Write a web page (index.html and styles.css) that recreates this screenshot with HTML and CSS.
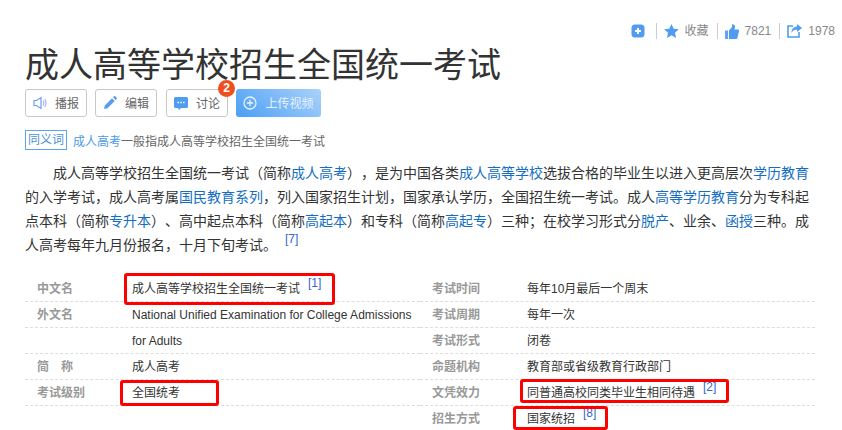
FILE: index.html
```html
<!DOCTYPE html>
<html>
    <head>
        <meta charset="utf-8">
        <title>成人高等学校招生全国统一考试</title>
        <link rel="stylesheet" href="styles.css">
    </head>
    <body>
        <div class="topBar">
            <span class="topItem">
                <svg class="topIcon" width="14" height="14" viewBox="0 0 14 14"><rect x="0.500" y="0.500" width="13" height="13" rx="3.500" fill="#4f9cf0"/><path d="M7 4v6M4 7h6" stroke="#fff" stroke-width="2"/></svg>
            </span>
            <span class="topItem">
                <svg class="topIcon" width="15" height="14" viewBox="0 0 15 14"><path d="M7.500 0l2.200 4.700 5.100.6-3.800 3.500 1 5.100-4.500-2.600L3 13.900l1-5.100L.2 5.300l5.100-.6z" fill="#4f9cf0"/></svg>
                收藏
            </span>
            <span class="topItem">
                <svg class="topIcon" width="14" height="15" viewBox="0 0 14 15"><path d="M0 6.500h3V15H0z" fill="#5fa3f2"/><path d="M4 6.500l3-3.500V.3c2-.3 3 1.200 3 2.700L9.500 5.500H13c1 0 1 .8 1 1.500l-1.500 6.500c-.2 1-.8 1.500-1.500 1.500H4z" fill="#4f9cf0"/></svg>
                7821
            </span>
            <span class="topItem">
                <svg class="topIcon" width="15" height="14" viewBox="0 0 15 14"><path d="M6 2H1v11h11V8" fill="none" stroke="#4f9cf0" stroke-width="1.600"/><path d="M10 0l5 4-5 4V5.500C7.500 5.500 5.500 6.500 4.500 9c0-4 2-6 5.500-6.500z" fill="#4f9cf0"/></svg>
                1978
            </span>
        </div>

        <div class="main">
            <h1 class="title">成人高等学校招生全国统一考试</h1>

            <div class="actions">
                <a class="btn">
                    <svg width="14" height="14" viewBox="0 0 14 14"><path d="M1 4.500h2.500L8 1.500v11L3.500 9.500H1z" fill="#fff" stroke="#6f9cf5" stroke-width="1.200"/><path d="M10 4.500c1 1.500 1 3.500 0 5M11.800 3c1.500 2.500 1.500 5.500 0 8" fill="none" stroke="#a9b4f7" stroke-width="1.200"/></svg>
                    播报
                </a>
                <a class="btn btnEdit">
                    <svg width="14" height="14" viewBox="0 0 14 14"><path d="M1 13l.8-3.500L9 2.300l2.700 2.700-7.200 7.200zM10 1.300L11 .3a1 1 0 0 1 1.300 0l1.400 1.400a1 1 0 0 1 0 1.300l-1 1z" fill="#5b9bf0"/></svg>
                    编辑
                </a>
                <a class="btn btnTalk">
                    <svg width="14" height="14" viewBox="0 0 14 14"><path d="M1.500 1h11A1.500 1.500 0 0 1 14 2.500v8a1.500 1.500 0 0 1-1.500 1.500H7l-2 2-1-2H1.500A1.500 1.500 0 0 1 0 10.500v-8A1.500 1.500 0 0 1 1.500 1z" fill="#4f9cf0"/><path d="M3.500 6.500h1.500M6.300 6.500h1.500M9.100 6.500h1.500" stroke="#fff" stroke-width="1.500"/></svg>
                    讨论
                    <span class="badge">2</span>
                </a>
                <a class="btnUpload">
                    <svg width="14" height="14" viewBox="0 0 14 14"><circle cx="7" cy="7" r="6" fill="none" stroke="#e6f1fe" stroke-width="1.300"/><path d="M7 3.800v6.400M3.800 7h6.400" stroke="#e6f1fe" stroke-width="1.300"/></svg>
                    上传视频
                </a>
            </div>

            <div class="synonym">
                <span class="synTag">同义词</span>
                <span><a class="synLink">成人高考</a>一般指成人高等学校招生全国统一考试</span>
            </div>

            <p class="summary">成人高等学校招生全国统一考试（简称<a>成人高考</a>），是为中国各类<a>成人高等学校</a>选拔合格的毕业生以进入更高层次<a>学历教育</a>的入学考试，成人高考属<a>国民教育系列</a>，列入国家招生计划，国家承认学历，全国招生统一考试。成人<a>高等学历教育</a>分为专科起点本科（简称<a>专升本</a>）、高中起点本科（简称<a>高起本</a>）和专科（简称<a>高起专</a>）三种；在校学习形式分<a>脱产</a>、业余、<a>函授</a>三种。成人高考每年九月份报名，十月下旬考试。<sup class="ref refPara">[7]</sup></p>

            <div class="infoBox">
                <div class="infoCol">
                    <div class="infoRow"><span class="infoKey">中文名</span><span class="infoVal">成人高等学校招生全国统一考试<sup class="ref">[1]</sup></span></div>
                    <div class="infoRow"><span class="infoKey">外文名</span><span class="infoVal">National Unified Examination for College Admissions</span></div>
                    <div class="infoRow"><span class="infoKey"></span><span class="infoVal">for Adults</span></div>
                    <div class="infoRow"><span class="infoKey">简&emsp;称</span><span class="infoVal">成人高考</span></div>
                    <div class="infoRow"><span class="infoKey">考试级别</span><span class="infoVal">全国统考</span></div>
                </div>
                <div class="infoCol">
                    <div class="infoRow"><span class="infoKey">考试时间</span><span class="infoVal">每年10月最后一个周末</span></div>
                    <div class="infoRow"><span class="infoKey">考试周期</span><span class="infoVal">每年一次</span></div>
                    <div class="infoRow"><span class="infoKey">考试形式</span><span class="infoVal">闭卷</span></div>
                    <div class="infoRow"><span class="infoKey">命题机构</span><span class="infoVal">教育部或省级教育行政部门</span></div>
                    <div class="infoRow"><span class="infoKey">文凭效力</span><span class="infoVal">同普通高校同类毕业生相同待遇<sup class="ref">[2]</sup></span></div>
                    <div class="infoRow"><span class="infoKey">招生方式</span><span class="infoVal">国家统招<sup class="ref">[8]</sup></span></div>
                </div>
                <div class="mark mark1"></div>
                <div class="mark mark2"></div>
                <div class="mark mark3"></div>
                <div class="mark mark4"></div>
            </div>
        </div>
    </body>
</html>
```

FILE: styles.css
```css
html, body{
    margin: 0;
    height: 430px;
    overflow: hidden;
}

body{
    font-family: "Liberation Sans", "Noto Sans CJK SC", sans-serif;
    background-color: #fff;
    color: #333;
    text-spacing-trim: space-all;
}

a{
    color: #136ec2;
    text-decoration: none;
}

.topBar{
    display: flex;
    justify-content: flex-end;
    align-items: center;
    height: 18px;
    padding: 22px 7px 0 0;
    font-size: 12px;
    color: #888;
}
.topItem{
    display: flex;
    align-items: center;
    gap: 6px;
    height: 16px;
    padding: 0 8px 0 7px;
    border-left: 1px solid #ccc;
    line-height: 16px;
}
.topItem:first-child{
    border-left: 0;
    padding-right: 11px;
}
.topItem:last-child{
    padding-right: 0;
}

.main{
    width: 790px;
    margin-left: 25px;
}

.title{
    margin: 2px 0 0;
    font-size: 34px;
    font-weight: 400;
    line-height: 47px;
    color: #333;
}

.actions{
    display: flex;
    gap: 8px;
    height: 28px;
}
.btn, .btnUpload{
    display: flex;
    align-items: center;
    justify-content: center;
    gap: 8px;
    box-sizing: border-box;
    height: 28px;
    padding-bottom: 1px;
    font-size: 12px;
    border-radius: 3px;
}
.btn{
    position: relative;
    width: 62px;
    border: 1px solid #c8c8c8;
    color: #666;
}
.btnEdit{
    margin-right: 1px;
}
.btnUpload{
    width: 85px;
    color: #e6f1fe;
    background: linear-gradient(40deg, #4a9ff5, #abd2fa);
}
.badge{
    position: absolute;
    top: -10px;
    right: -8px;
    width: 17px;
    height: 17px;
    border-radius: 50%;
    background-color: #f04e1e;
    color: #fff;
    font-size: 12px;
    font-weight: 700;
    line-height: 17px;
    text-align: center;
}

.synonym{
    display: flex;
    align-items: center;
    gap: 6px;
    margin-top: 13px;
    font-size: 12px;
    color: #666;
}
.synTag{
    box-sizing: border-box;
    width: 42px;
    height: 20px;
    border: 1px solid #5aa5ee;
    color: #4c8fd8;
    line-height: 19px;
    text-align: center;
}
.synLink{
    color: #4a9ae6;
}

.summary{
    width: 784px;
    margin: 11px 0 0;
    font-size: 14px;
    line-height: 24px;
    text-indent: 28px;
    text-align: justify;
}

.ref{
    margin-left: 8px;
    font-size: 12px;
    line-height: 0;
    vertical-align: 6px;
    color: #3366cc;
}
.refPara{
    vertical-align: 7px;
}

.infoBox{
    position: relative;
    display: flex;
    margin-top: 19px;
}
.infoCol{
    width: 395px;
}
.infoRow{
    display: flex;
    box-sizing: border-box;
    height: 26px;
    border-bottom: 1px dashed #ddd;
    font-size: 12px;
    line-height: 27px;
}
.infoKey{
    width: 107px;
    padding-left: 12px;
    box-sizing: border-box;
    font-weight: 700;
    color: #999;
}
.infoVal{
    white-space: nowrap;
}

.mark{
    position: absolute;
    box-sizing: border-box;
    border: 3px solid #f00;
    border-radius: 3px;
}
.mark1{
    left: 99px;
    top: -3px;
    width: 211px;
    height: 32px;
}
.mark2{
    left: 95px;
    top: 104px;
    width: 99px;
    height: 26px;
}
.mark3{
    left: 495px;
    top: 103px;
    width: 209px;
    height: 24px;
}
.mark4{
    left: 488px;
    top: 130px;
    width: 95px;
    height: 24px;
}
```
